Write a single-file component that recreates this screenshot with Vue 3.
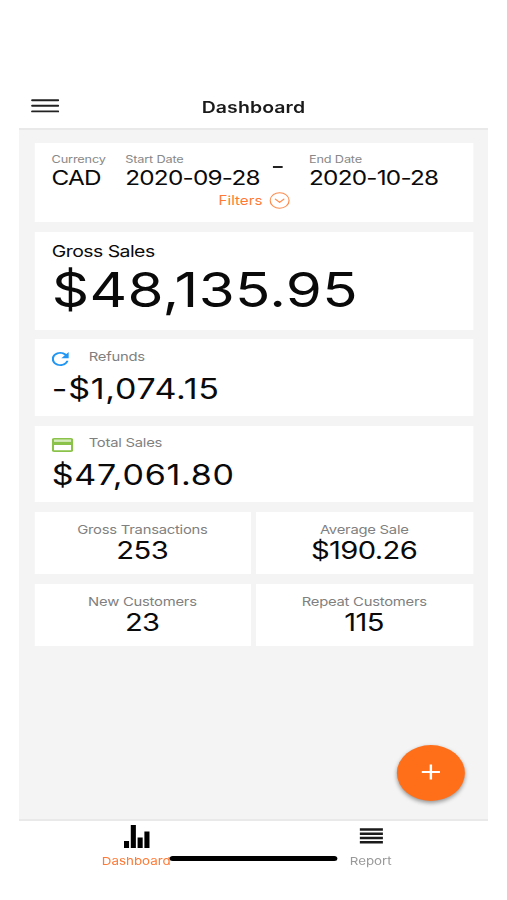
<script setup>
import { ref } from "vue";

const currency = ref("CAD");
const startDate = ref("2020-09-28");
const endDate = ref("2020-10-28");

const stats = [
  { label: "Gross Transactions", value: "253" },
  { label: "Average Sale", value: "$190.26" },
  { label: "New Customers", value: "23" },
  { label: "Repeat Customers", value: "115" },
];
</script>

<template>
  <div class="phone">
    <header class="header">
      <button class="menuBtn">
        <svg width="23" height="14" viewBox="0 0 23 14">
          <path d="M0.8 1.2H22.2M0.8 6.8H22.2M0.8 12.4H22.2" stroke="#222" stroke-width="1.9" stroke-linecap="round" />
        </svg>
      </button>
      <h1>Dashboard</h1>
    </header>

    <main class="content">
      <section class="card filterCard">
        <div class="filterRow">
          <div class="field currency">
            <span class="fieldLabel">Currency</span>
            <span class="fieldValue">{{ currency }}</span>
          </div>
          <div class="field start">
            <span class="fieldLabel">Start Date</span>
            <span class="fieldValue">{{ startDate }}</span>
          </div>
          <div class="dash"></div>
          <div class="field">
            <span class="fieldLabel">End Date</span>
            <span class="fieldValue">{{ endDate }}</span>
          </div>
        </div>
        <button class="filters">
          <span>Filters</span>
          <svg width="17" height="17" viewBox="0 0 17 17" fill="none" stroke="#ff8a4c">
            <circle cx="8.5" cy="8.5" r="7.8" stroke-width="1" />
            <path d="M5 7.2L8.5 10.4L12 7.2" stroke-width="1.1" stroke-linecap="round" stroke-linejoin="round" />
          </svg>
        </button>
      </section>

      <section class="card gross">
        <p class="grossLabel">Gross Sales</p>
        <p class="grossValue">$48,135.95</p>
      </section>

      <section class="card amount refunds">
        <div class="amountHead">
          <span class="amountIcon">
            <svg width="14" height="14" viewBox="4 4 16 16">
              <path
                fill="#2196f3"
                d="M17.65 6.35C16.2 4.9 14.21 4 12 4c-4.42 0-7.99 3.58-7.99 8s3.57 8 7.99 8c3.73 0 6.84-2.55 7.73-6h-2.08c-.82 2.33-3.04 4-5.65 4-3.31 0-6-2.69-6-6s2.69-6 6-6c1.66 0 3.14.69 4.22 1.78L13 11h7V4l-2.35 2.35z"
              />
            </svg>
          </span>
          <span class="amountLabel">Refunds</span>
        </div>
        <p class="amountValue">-$1,074.15</p>
      </section>

      <section class="card amount total">
        <div class="amountHead">
          <span class="amountIcon">
            <svg width="17.6" height="14" viewBox="2 4 20 16">
              <path
                fill="#8bc34a"
                d="M20 4H4c-1.11 0-1.99.89-1.99 2L2 18c0 1.11.89 2 2 2h16c1.11 0 2-.89 2-2V6c0-1.11-.89-2-2-2zm0 14H4v-6h16v6zm0-10H4V6h16v2z"
              />
              <path fill="#d6ebbd" d="M4 6h16v2H4z" />
            </svg>
          </span>
          <span class="amountLabel">Total Sales</span>
        </div>
        <p class="amountValue">$47,061.80</p>
      </section>

      <div class="stats">
        <div v-for="stat in stats" :key="stat.label" class="card stat">
          <span class="statLabel">{{ stat.label }}</span>
          <span class="statValue">{{ stat.value }}</span>
        </div>
      </div>

      <button class="addBtn">
        <svg width="16" height="16" viewBox="0 0 16 16">
          <path d="M8 0.5V15.5M0.5 8H15.5" stroke="#fff" stroke-width="2" />
        </svg>
      </button>
    </main>

    <nav class="tabs">
      <a class="tab active">
        <svg width="22" height="23" viewBox="0 0 22 23">
          <path d="M0.4 16h4.2v7H0.4zM6 0h4.2v23H6zM11.6 12.4h4.2V23h-4.2zM17.2 6.6h4.2V23h-4.2z" />
        </svg>
        <span>Dashboard</span>
      </a>
      <a class="tab">
        <svg width="20" height="23" viewBox="0 0 20 23">
          <path d="M0.5 4.4h19M0.5 8.7h19M0.5 13h19M0.5 17.3h19" stroke="#1a1a1a" stroke-width="2.5" />
        </svg>
        <span>Report</span>
      </a>
      <div class="homeBar"></div>
    </nav>
  </div>
</template>

<style>
body {
  margin: 0;
  background: #fff;
}
</style>

<style scoped>
/* 386pt wide screen, widened to 469px */
.phone {
  width: 386px;
  height: 900px;
  margin-left: 19px;
  display: flex;
  flex-direction: column;
  transform: scaleX(1.215);
  transform-origin: left top;
  font-family: "Inter", "Liberation Sans", sans-serif;
  color: #0a0a0a;
}

p,
h1 {
  margin: 0;
  font-weight: 400;
}

button {
  border: none;
  padding: 0;
  background: none;
  font-family: inherit;
}

.header {
  box-sizing: border-box;
  position: relative;
  height: 130px;
  padding-top: 86px;
  border-bottom: 2px solid #e9e9e9;
}

.menuBtn {
  position: absolute;
  left: 9.6px;
  top: 98.5px;
  display: flex;
}

.header h1 {
  font-size: 16px;
  line-height: 43px;
  font-weight: 600;
  text-align: center;
  color: #1a1a1a;
  letter-spacing: 0.1px;
}

.content {
  box-sizing: border-box;
  position: relative;
  height: 689px;
  padding: 13px 12px 0 12.8px;
  background: #f4f4f4;
  display: flex;
  flex-direction: column;
}

.card {
  box-sizing: border-box;
  background: #fff;
}

.filterCard {
  height: 79px;
  padding: 10px 14px 0;
  margin-bottom: 10px;
}

.filterRow {
  display: flex;
}

.field {
  display: flex;
  flex-direction: column;
}

.currency {
  width: 60.6px;
}

.start {
  width: 121.6px;
}

.fieldLabel {
  font-size: 10.5px;
  line-height: 13px;
  color: #888;
  letter-spacing: -0.15px;
}

.fieldValue {
  font-size: 20px;
  line-height: 24px;
  letter-spacing: -0.62px;
}

.dash {
  width: 8px;
  height: 2px;
  margin: 13px 21.7px 0 0;
  background: #222;
}

.filters {
  display: flex;
  align-items: center;
  gap: 5.4px;
  margin: 2px 0 0 137.4px;
  font-size: 12.5px;
  line-height: 18px;
  color: #ff7a35;
}

.filters svg {
  margin-bottom: 1px;
}

.gross {
  height: 98px;
  padding: 8px 14.2px 0;
  margin-bottom: 9px;
}

.grossLabel {
  font-size: 16px;
  line-height: 22px;
  letter-spacing: -0.45px;
}

.grossValue {
  font-size: 48px;
  line-height: 56px;
  letter-spacing: 0.25px;
}

.amount {
  height: 77px;
  padding: 10px 14.2px 0;
  margin-bottom: 10px;
}

.total {
  height: 76px;
  padding-top: 9px;
}

.amountHead {
  display: flex;
}

.amountIcon {
  width: 30.4px;
  padding-top: 2.5px;
  height: 14px;
  display: flex;
}

.amountLabel {
  font-size: 12.2px;
  line-height: 16px;
  color: #808080;
  letter-spacing: -0.2px;
}

.amountValue {
  font-size: 28px;
  line-height: 34px;
  margin-top: 6px;
  letter-spacing: 0.6px;
}

.stats {
  display: grid;
  grid-template-columns: 1fr 1fr;
  gap: 10px 4px;
}

.stat {
  height: 62px;
  padding-top: 10px;
  display: flex;
  flex-direction: column;
  align-items: center;
}

.statLabel {
  font-size: 12.2px;
  line-height: 16px;
  color: #808080;
  letter-spacing: -0.2px;
  margin-right: 1px;
}

.statValue {
  font-size: 24px;
  line-height: 26px;
  letter-spacing: -0.5px;
  margin-right: 1.4px;
}

.addBtn {
  position: absolute;
  right: 19.5px;
  bottom: 18px;
  width: 56px;
  height: 56px;
  border-radius: 50%;
  background: #ff6f1a;
  box-shadow: 0 2px 4px rgba(0, 0, 0, 0.4);
  display: flex;
  align-items: center;
  justify-content: center;
}

.addBtn svg {
  margin-bottom: 2px;
}

.tabs {
  box-sizing: border-box;
  position: relative;
  height: 81px;
  border-top: 2px solid #e9e9e9;
  display: flex;
}

.tab {
  width: 50%;
  padding-top: 4px;
  display: flex;
  flex-direction: column;
  align-items: center;
  font-size: 11px;
  line-height: 14px;
  color: #999;
}

.tab span {
  margin-top: 6px;
}

.tab.active {
  color: #ff7a35;
}

.homeBar {
  position: absolute;
  left: 124px;
  top: 34.5px;
  width: 138px;
  height: 5px;
  border-radius: 3px;
  background: #000;
}
</style>
